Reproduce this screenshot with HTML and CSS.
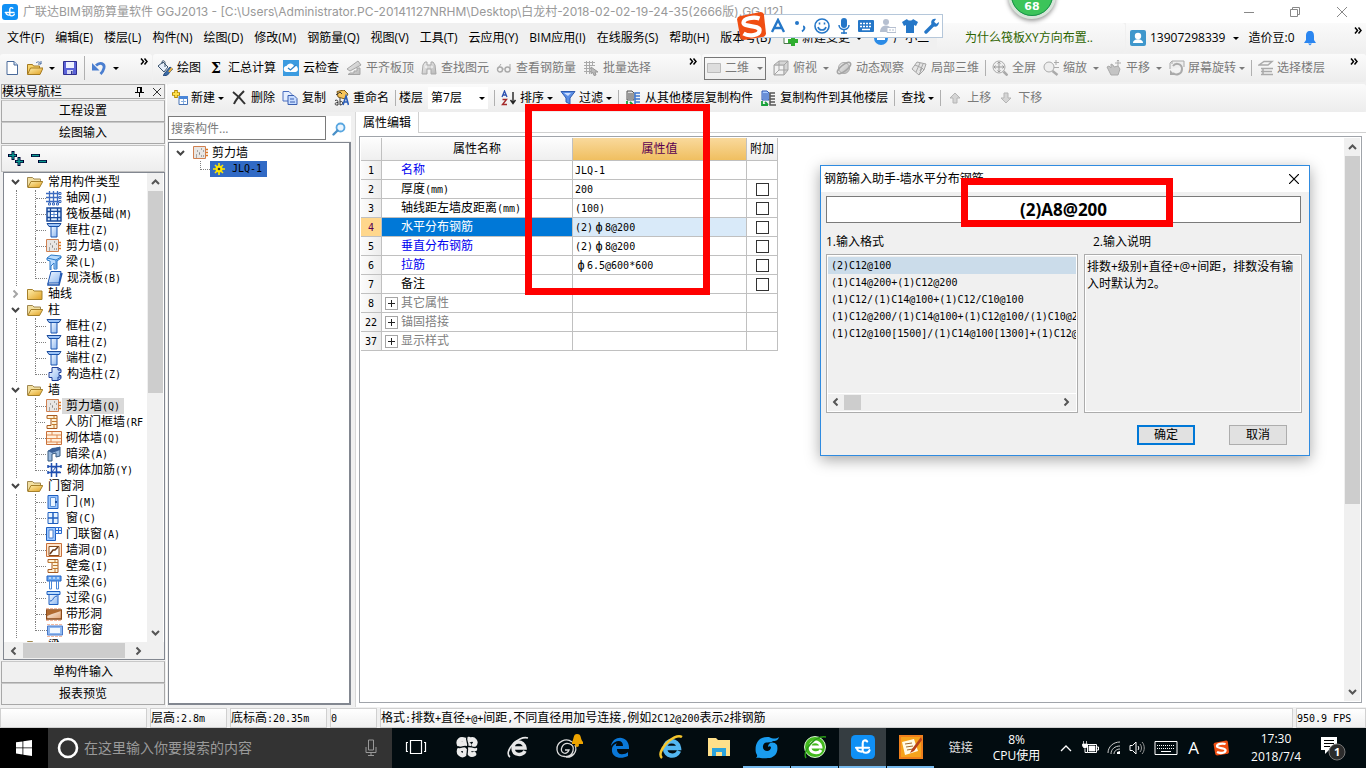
FILE: index.html
```html
<!DOCTYPE html>
<html lang="zh-CN">
<head>
<meta charset="utf-8">
<title>广联达BIM钢筋算量软件 GGJ2013</title>
<link rel="stylesheet" href="styles.css">
</head>
<body>
<svg class="defs" aria-hidden="true">
  <defs>
    <linearGradient id="gold" x1="0" y1="0" x2="1" y2="1"><stop offset="0" stop-color="#fff0b0"/><stop offset="1" stop-color="#e0a020"/></linearGradient>
    <linearGradient id="blu" x1="0" y1="0" x2="1" y2="1"><stop offset="0" stop-color="#f2f8ff"/><stop offset="1" stop-color="#8fb8f0"/></linearGradient>
    <linearGradient id="brn" x1="0" y1="0" x2="1" y2="1"><stop offset="0" stop-color="#fffdf8"/><stop offset="1" stop-color="#e0a070"/></linearGradient>
    <linearGradient id="gry" x1="0" y1="0" x2="1" y2="1"><stop offset="0" stop-color="#f0f0f0"/><stop offset="1" stop-color="#b8b8b8"/></linearGradient>
  </defs>
  <symbol id="logo" viewBox="0 0 16 16"><rect width="16" height="16" rx="3" fill="#1090f5"/><path d="M10.800 4.300C9.600 3 7.800 3.600 7.800 5.500V11M3.300 8.500H12M4 8.700c0 2.600 3.500 2.600 3.800 2 .6 1.600 4 1.600 4.600-.6" fill="none" stroke="#fff" stroke-width="1.400" stroke-linecap="round"/></symbol>
  <symbol id="new" viewBox="0 0 16 16"><path d="M3 1.500h7l3.500 3.500v9.500H3z" fill="#fff" stroke="#4a6a9a"/><path d="M10 1.500V5h3.500" fill="#cfe0f5" stroke="#4a6a9a"/></symbol>
  <symbol id="open" viewBox="0 0 16 16"><path d="M.5 14V4.500h5l1 1.500h6v2" fill="#f7d36b" stroke="#a57a20"/><path d="M.5 14.500 3.500 8H16l-3 6.500z" fill="url(#gold)" stroke="#a57a20"/><path d="M9 3c2-2 4-1 5 1m0-3v3h-3" fill="none" stroke="#4a6fa5"/></symbol>
  <symbol id="save" viewBox="0 0 16 16"><path d="M1.500 1.500h13v13h-13z" fill="#5b63d8" stroke="#2f2f8f"/><path d="M4 2h8v6H4z" fill="#eef1ff"/><path d="M5 10h6v4H5z" fill="#d8dcf5"/><path d="M9 11h1.500v3H9z" fill="#333a90"/></symbol>
  <symbol id="undo" viewBox="0 0 16 16"><path d="M5 5.500c4-4 9-2 8 2.500-.6 2.500-2 4.500-3.500 6" fill="none" stroke="#4a7ed0" stroke-width="2.800"/><path d="M1 3v7.500h7.500z" fill="#4a7ed0"/></symbol>
  <symbol id="draw" viewBox="0 0 16 16"><path d="m1 6 5-4 5 5-4 5z" fill="#e5edf8" stroke="#39526d"/><path d="M5 4V1.500c1-1.500 3-.5 3 1V7" fill="none" stroke="#39526d"/><path d="m7 14 6-7 2.500 2-5 6-4 1z" fill="#3d6da8" stroke="#254a7c"/><path d="m12 12 3-4" stroke="#f2b23a" stroke-width="2"/></symbol>
  <symbol id="cloud" viewBox="0 0 16 16"><path d="M0 0h16v16H0z" fill="#3b9be0"/><path d="M4 12a3 3 0 0 1-.5-6C5 2.500 10 2.500 11 6a3 3 0 0 1 1.500 6z" fill="#fff"/><path d="m5 8 2.500 2L13 5" fill="none" stroke="#2d82c8" stroke-width="1.300"/></symbol>
  <symbol id="slab" viewBox="0 0 16 16"><path d="m1 9 11-8 3 4-11 6zM2 14.500h12V8h-3v3H8v2H4z" fill="url(#gry)" stroke="#a5a5a5"/></symbol>
  <symbol id="bino" viewBox="0 0 16 16"><path d="M2 5 4 2h2v3h4V2h2l2 3 1 9h-5V9H6v5H1z" fill="url(#gry)" stroke="#a8a8a8"/><path d="M4 7h2m4 0h2" stroke="#fff"/></symbol>
  <symbol id="glass" viewBox="0 0 16 16"><path d="M1.500 9 5 4M14 9V4M6.500 9h2" fill="none" stroke="#aaa"/><circle cx="4" cy="9.500" r="2.500" fill="none" stroke="#aaa" stroke-width="1.400"/><circle cx="11.500" cy="9.500" r="2.500" fill="none" stroke="#aaa" stroke-width="1.400"/></symbol>
  <symbol id="batch" viewBox="0 0 16 16"><path d="M1 2.500h11M1 5.500h11M1 8.500h7M1 11.500h7M3.500 1v13M6.500 1v13M9.500 1v5" stroke="#aaa"/><path d="m8 7 7 5h-3l1 3-2 .5-1-3-2 1z" fill="#bbb" stroke="#999"/></symbol>
  <symbol id="cube" viewBox="0 0 16 16"><path d="m1 5 5-4h9v9l-4 5H1z" fill="#d5d5d5" stroke="#a5a5a5"/><path d="M2 6h8v8H2z" fill="#f2f2f2"/><path d="M1 5h10v10M11 5l4-4M6 1v9l-5 5M6 10h9" fill="none" stroke="#a5a5a5"/></symbol>
  <symbol id="planet" viewBox="0 0 16 16"><circle cx="8" cy="8" r="5.500" fill="url(#gry)" stroke="#aaa"/><ellipse cx="8" cy="8" rx="8" ry="3" transform="rotate(-38 8 8)" fill="none" stroke="#a5a5a5" stroke-width="1.500"/></symbol>
  <symbol id="part" viewBox="0 0 16 16"><path d="m1 9 5-7 9 2-2 6-5 5z" fill="#e5e5e5" stroke="#a5a5a5"/><path d="m4 5 7 3 2 2M9 3 5 12M11 8l-3 7M12 4l-3 7" stroke="#a5a5a5" fill="none"/></symbol>
  <symbol id="full" viewBox="0 0 16 16"><circle cx="7" cy="7" r="6" fill="#eee" stroke="#aaa"/><path d="M7 2v10M2 7h10M5.500 3.500 7 2l1.500 1.500M5.500 10.500 7 12l1.500-1.500M3.500 5.500 2 7l1.500 1.500M10.500 5.500 12 7l-1.500 1.500" fill="none" stroke="#999"/><path d="m11.500 11.500 4 4" stroke="#aaa" stroke-width="2.500"/></symbol>
  <symbol id="zoomi" viewBox="0 0 16 16"><circle cx="6" cy="7" r="5" fill="#eee" stroke="#aaa"/><path d="m9.500 11 5 4" stroke="#aaa" stroke-width="2.500"/><path d="M13 0v5M11 2.500h5M11 7.500h5" stroke="#aaa"/></symbol>
  <symbol id="hand" viewBox="0 0 16 16"><path d="m1 7 2-1 2 2V4l2 1 1 2 4-1 2 3-2 6H5z" fill="#c4c4c4" stroke="#aaa"/><path d="M12 0v6M9 3h6M10.800 1 12 0l1.200 1" stroke="#aaa" fill="none"/></symbol>
  <symbol id="rot" viewBox="0 0 16 16"><path d="M1 9V3l2-2h12v6M3 1v3" fill="#eee" stroke="#aaa"/><path d="M4 6c3-4 9-2 9 3s-6 7-9 4" fill="none" stroke="#aaa" stroke-width="2"/><path d="M1 10v5h5z" fill="#aaa"/></symbol>
  <symbol id="floors" viewBox="0 0 16 16"><path d="M1 5 6 1.500h8L10 5zM3 8.500h12M5 8v6M3 11.500h11M3 14.500h12" fill="none" stroke="#aaa" stroke-width="1.500"/></symbol>
  <symbol id="add" viewBox="0 0 16 16"><path d="M7 6.500h8.500v8H7z" fill="#fff" stroke="#4673b5"/><path d="M7 6h9v3H7z" fill="#4a86d8"/><path d="M9 11.500h5M11.500 9v5" stroke="#8ab0e0"/><path d="M4 0v8M0 4h8" stroke="#b58b00" stroke-width="3.600"/><path d="M4 1v6M1 4h6" stroke="#ffe04a" stroke-width="1.800"/></symbol>
  <symbol id="del" viewBox="0 0 16 16"><path d="M2 2c4 3 8 7 12 12M13 1C9 5 5 9 3 14" fill="none" stroke="#333" stroke-width="2"/></symbol>
  <symbol id="copy" viewBox="0 0 16 16"><path d="M1 1.500h6l3 3V11H1z" fill="#e5efff" stroke="#4a6fc0"/><path d="M6 5.500h6l3 3v6H6z" fill="#c7dcff" stroke="#3a5fb0"/><path d="M8 9h4m-4 3h5" stroke="#3a5fb0"/></symbol>
  <symbol id="ren" viewBox="0 0 16 16"><path d="M4 1.500 11 0l4 4-3 5-7-2z" fill="#f7c45a" stroke="#7d5a1a"/><path d="m3 5 4-3 2 2" stroke="#333" fill="none"/><path d="M2 10.500c3-1 3 0 3 4.500-4 .5-4-2.500 0-2.500M7 8v7c4 0 3-5 0-3" fill="none" stroke="#333"/><path d="m10 15 3-9 2.500 9m-4-3h3" fill="none" stroke="#2b5db8" stroke-width="1.600"/></symbol>
  <symbol id="sort" viewBox="0 0 16 16"><path d="m1 7 2.500-6L6 7M2 5h3" fill="none" stroke="#2b50b0" stroke-width="1.300"/><path d="M1.500 9.500h4l-4 5h4.500" fill="none" stroke="#a52a2a" stroke-width="1.400"/><path d="M12 2v11M9.500 10l2.500 3.500 2.500-3.500" fill="none" stroke="#222" stroke-width="1.400"/></symbol>
  <symbol id="filt" viewBox="0 0 16 16"><path d="M1 1.500h14L10 8v6l-4-2V8z" fill="#5b8ee5" stroke="#2f5cb0"/><path d="M4 3h7L8 6z" fill="#cfe0ff"/></symbol>
  <symbol id="cpf" viewBox="0 0 16 16"><path d="M2 1h5l2 2v7H2z" fill="#ddd" stroke="#555"/><path d="M3 4h5M3 6h5M3 8h5" stroke="#555"/><path d="M15 3h-5v12h6M10 6h5M10 9h5M10 12h5" fill="none" stroke="#3d77d0" stroke-width="1.500"/><path d="M2 11v4h6M5 12l3 3" fill="none" stroke="#19a03a" stroke-width="1.800"/></symbol>
  <symbol id="cpt" viewBox="0 0 16 16"><path d="M2 1h5l2 2v7H2z" fill="#a8caff" stroke="#2c54b0"/><path d="M3 4h5M3 6h5M3 8h5" stroke="#2c54b0"/><path d="M15 3h-5v12h6M10 6h5M10 9h5M10 12h5" fill="none" stroke="#555" stroke-width="1.500"/><path d="M2 11v4h6M5 12l3 3" fill="none" stroke="#19a03a" stroke-width="1.800"/></symbol>
  <symbol id="up" viewBox="0 0 16 16"><path d="m8 3 5 5h-3v5H6V8H3z" fill="#d5d5d5" stroke="#b5b5b5"/></symbol>
  <symbol id="down" viewBox="0 0 16 16"><path d="m8 13 5-5h-3V3H6v5H3z" fill="#d5d5d5" stroke="#b5b5b5"/></symbol>
  <symbol id="car" viewBox="0 0 6 3"><path d="M0 0h6L3 3z" fill="currentColor"/></symbol>
  <symbol id="more" viewBox="0 0 8 7"><path d="m1 .5 2.500 3L1 6.500m3.500-6 2.500 3-2.500 3" fill="none" stroke="#000" stroke-width="1.500"/></symbol>
  <symbol id="user" viewBox="0 0 16 16"><rect width="16" height="16" rx="2" fill="#3f97cc"/><circle cx="8" cy="6" r="3.200" fill="#fff"/><path d="M3 13c0-5 10-5 10 0z" fill="#fff"/></symbol>
  <symbol id="bell" viewBox="0 0 12 16"><path d="M6 1C3 1 2 3 2 6v4L0 13h12l-2-3V6c0-3-1-5-4-5z" fill="#2b86f0"/><path d="m4 13.500 2 2 2-2z" fill="#2b86f0"/></symbol>
  <symbol id="lens" viewBox="0 0 14 14"><circle cx="8.500" cy="5.500" r="4" fill="#eaf5ff" stroke="#58a6e0" stroke-width="1.800"/><path d="M5.500 8.500 1.500 12.500" stroke="#4a90c8" stroke-width="2.400" stroke-linecap="round"/></symbol>
  <symbol id="av" viewBox="0 0 9 6"><path d="M1 1l3.500 3.500L8 1" fill="none" stroke="currentColor" stroke-width="2"/></symbol>
  <symbol id="fo" viewBox="0 0 16 16"><path d="M.5 13V3.500h5L7 5h6.500v3" fill="#f2dfa0" stroke="#a08850"/><path d="M.8 13.500 4 7.500h11.800l-3.300 6z" fill="url(#gold)" stroke="#a5802a"/></symbol>
  <symbol id="fc" viewBox="0 0 16 16"><path d="M.5 13.500v-10h5L7 5h8v8.500z" fill="url(#gold)" stroke="#a5802a"/></symbol>
  <symbol id="t-grid" viewBox="0 0 16 16"><path d="M3.500 1v12M7.500 1v12M11.500 1v12M0 3.500h13M0 7.500h13M0 11.500h13" stroke="#3d6cc0" stroke-width="1.300"/><path d="M13 2.500h2v2h-2zM13 6.500h2v2h-2zM13 10.500h2v2h-2zM2.500 13h2v2h-2zM6.500 13h2v2h-2zM10.500 13h2v2h-2z" fill="#fff" stroke="#3d6cc0"/></symbol>
  <symbol id="t-raft" viewBox="0 0 16 16"><path d="M1 2h14v13H1z" fill="#d8ebff" stroke="#1a4a9a" stroke-width="1.500"/><path d="M4.500 2v13M11.500 2v13M1 5.500h14M1 11.500h14" stroke="#1a4a9a" stroke-width="1.300"/><path d="M5 6h6v5H5z" fill="#fff"/><path d="M8 6v5M5 8.500h6" stroke="#5a8ad0"/></symbol>
  <symbol id="t-col" viewBox="0 0 16 16"><path d="M1 1.500h14l-2 3H3z" fill="#9cc4f8" stroke="#1a4a9a"/><path d="M5 4.500h6V15H5z" fill="url(#blu)" stroke="#1a55b0"/></symbol>
  <symbol id="t-wall" viewBox="0 0 16 16"><path d="M.5 1.500h12v12H.5z" fill="#e8e6e4" stroke="#d08050"/><path d="M3 10h1m2-2h1M4 6h1m3 5h1m1-5h1m-3-2h1M3 12h1m6-1h1M6 9h1" stroke="#666"/><path d="M13 4.500h2M13 7.500h2M13 10.500h2" stroke="#e07820" stroke-width="1.300"/></symbol>
  <symbol id="t-beam" viewBox="0 0 16 16"><path d="m1 4 4-3 10 1v2l-4 3v8H8V9l-3 3v4H4V7L1 6z" fill="#b9dcff" stroke="#2a78c8"/><path d="m1 4 9 2 5-3M10 6v8" stroke="#2a78c8" fill="none"/></symbol>
  <symbol id="t-slab" viewBox="0 0 16 16"><path d="M4 1.500h10L12 13H1z" fill="url(#blu)" stroke="#1f56b0"/><path d="M1 13v2h11l3-12" fill="none" stroke="#1f56b0" stroke-width="1.500"/></symbol>
  <symbol id="t-con" viewBox="0 0 16 16"><path d="M5 1.500h6l3 2v3h-2v3h2v3l-3 2H5v-3H2v-5h3z" fill="url(#blu)" stroke="#1f3f98"/><path d="M5 6.500H2m3 5H2M11 2v2h3m-3 10v-3h3" stroke="#1f3f98" fill="none"/></symbol>
  <symbol id="t-civ" viewBox="0 0 16 16"><path d="M2 1.500h10v13H2v-3h4v-7H2z" fill="#fff3d8" stroke="#a85a20"/><path d="M2 4.500h10M7 7.500h5M7 10.500h5M9 2v3m0 6v3" stroke="#c07a30"/></symbol>
  <symbol id="t-brick" viewBox="0 0 16 16"><path d="M.5 1.500h15v13H.5z" fill="#fff0dc" stroke="#c8703a"/><path d="M1 5h14M1 8.500h14M1 12h14M6 2v3m5 0v3.500m-6 0V12m6 0v2" stroke="#e08a50"/></symbol>
  <symbol id="t-ab" viewBox="0 0 16 16"><path d="M2 5 14 1v9l-4 1v-4l-4 1v7H2z" fill="#9cbce0" stroke="#35587f"/><path d="m2 5 4 2 8-3V1L6 2z" fill="#3a6098"/></symbol>
  <symbol id="t-jj" viewBox="0 0 16 16"><path d="M1 4.500h13M1 10.500h13M4.500 1v14M9.500 1v14M1 3v3M14 3v3M1 9v3" fill="none" stroke="#1f4fb0" stroke-width="1.500"/><path d="M5 5h4l-4 5h8" fill="none" stroke="#1f4fb0"/></symbol>
  <symbol id="t-door" viewBox="0 0 16 16"><path d="M2 1.500h10v13H2z" fill="#9cc7ff" stroke="#1f5fc0"/><path d="M4.500 3.500h5v9h-5z" fill="#eaf4ff" stroke="#5a90d8"/><path d="M9 7h2v2H9z" fill="#1f4fa0"/></symbol>
  <symbol id="t-win" viewBox="0 0 16 16"><path d="M2 2.500h10v11H2z" fill="#e6f3ff" stroke="#1f5fc0"/><path d="M7 2v12M2 8h10" stroke="#1f5fc0" stroke-width="1.500"/></symbol>
  <symbol id="t-dw" viewBox="0 0 16 16"><path d="M.5 1.500h9v13h-9z" fill="#9cc7ff" stroke="#1f5fc0"/><path d="M3 4h4v8H3z" fill="#fff" stroke="#4a80d0"/><path d="M9.500 1.500h6v6h-6zM12.500 1v6M10 4.500h6" fill="#e6f3ff" stroke="#2b6cd0"/></symbol>
  <symbol id="t-hole" viewBox="0 0 16 16"><path d="M.5 1.500h15v13H.5z" fill="#ffe5cc" stroke="#c8703a"/><path d="M3 4.500h10v9H3z" fill="#fff" stroke="#8a4a1a"/><path d="m4 12 3-4h2l3-3" fill="none" stroke="#6a3a1a" stroke-width="1.500"/></symbol>
  <symbol id="t-ll" viewBox="0 0 16 16"><path d="M1 2h14v5H1z" fill="#6aa8f0" stroke="#1f5fc0"/><path d="M3.500 7h2v8h-2zM10.500 7h2v8h-2z" fill="#fff" stroke="#4a88d8"/><path d="M4 3v2m4-2v2m4-2v2" stroke="#fff"/></symbol>
  <symbol id="t-gl" viewBox="0 0 16 16"><path d="M1 1.500h13v3H1z" fill="#b9dcff" stroke="#1f5fc0"/><path d="M3 4.500h9v10H3z" fill="url(#blu)" stroke="#1f5fc0"/><path d="M4 11c4 0 2-4 7-5" fill="none" stroke="#1f5fc0"/></symbol>
  <symbol id="t-sh" viewBox="0 0 16 16"><path d="M0 2.500h16M0 14.500h16" stroke="#f3b9a0" stroke-dasharray="3 1"/><path d="M.5 4h15v9H.5z" fill="url(#brn)" stroke="#8a4a1a" stroke-width="1.400"/><path d="m1 10 5-2 9-3V4H1z" fill="#b06a30"/></symbol>
  <symbol id="t-sw" viewBox="0 0 16 16"><path d="M0 2.500h16M0 14.500h16" stroke="#f3b9a0" stroke-dasharray="3 1"/><path d="M.5 4h15v9H.5z" fill="#8fb8f0" stroke="#4a78c8"/><path d="M3 6h10v5H3z" fill="#f2f8ff"/></symbol>
  <symbol id="sogou" viewBox="0 0 28 28"><path d="M3 5 23 1q2 0 3 2l2 18q0 2-2 3L7 27q-2 0-3-2L1 8q0-2 2-3z" fill="#f04e12"/><path d="M22 7C16 5 7 7 7 11s15 2 15 7-10 6-15 3" fill="none" stroke="#fff" stroke-width="4"/></symbol>
</svg>

<div class="app">
  <header class="titlebar">
    <svg class="i16"><use href="#logo"/></svg>
    <h1 class="title">广联达BIM钢筋算量软件 GGJ2013 - [C:\Users\Administrator.PC-20141127NRHM\Desktop\白龙村-2018-02-02-19-24-35(2666版).GGJ12]</h1>
    <div class="winbtns">
      <button aria-label="最小化"><svg width="12" height="12" viewBox="0 0 12 12"><path d="M1 6.500h10" stroke="#888"/></svg></button>
      <button aria-label="还原"><svg width="12" height="12" viewBox="0 0 12 12"><path d="M1.500 3.500h7v7h-7zM3.500 3.500v-2h7v7h-2" fill="none" stroke="#888"/></svg></button>
      <button aria-label="关闭"><svg width="12" height="12" viewBox="0 0 12 12"><path d="m1 1 10 10M11 1 1 11" stroke="#888"/></svg></button>
    </div>
  </header>

  <nav class="menubar">
    <div class="menus">
      <button>文件(F)</button><button>编辑(E)</button><button>楼层(L)</button><button>构件(N)</button><button>绘图(D)</button><button>修改(M)</button><button>钢筋量(Q)</button><button>视图(V)</button><button>工具(T)</button><button>云应用(Y)</button><button>BIM应用(I)</button><button>在线服务(S)</button><button>帮助(H)</button><button>版本号(B)</button>
      <button class="tb"><svg class="i16" viewBox="0 0 16 16"><path d="M2 1.500h10v12H2z" fill="#fff" stroke="#4a7a4a"/><path d="M11 6v10M6 11h10" stroke="#2fae2f" stroke-width="4"/></svg>新建变更<svg class="car gap"><use href="#car"/></svg></button>
      <button class="tb"><svg class="i16" viewBox="0 0 16 16"><circle cx="8" cy="8" r="7" fill="#2b8be6"/><path d="M4 7h8v3H4z" fill="#fff"/></svg>广小二</button>
    </div>
    <div class="tip"><a href="#tip">为什么筏板XY方向布置..</a></div>
    <div class="account">
      <button class="tb"><svg class="i16"><use href="#user"/></svg>13907298339<svg class="car"><use href="#car"/></svg></button>
      <span>造价豆:0</span>
      <button aria-label="通知"><svg width="12" height="16"><use href="#bell"/></svg></button>
      <button class="more" aria-label="更多"><svg width="8" height="7"><use href="#more"/></svg></button>
    </div>
  </nav>

  <div class="toolrow">
    <div class="tools file">
      <button aria-label="新建"><svg class="i16"><use href="#new"/></svg></button>
      <button class="tb wide" aria-label="打开"><svg class="i16"><use href="#open"/></svg><svg class="car"><use href="#car"/></svg></button>
      <button aria-label="保存"><svg class="i16"><use href="#save"/></svg></button>
      <i class="sep"></i>
      <button class="tb wide" aria-label="撤销"><svg class="i16"><use href="#undo"/></svg><svg class="car"><use href="#car"/></svg></button>
      <button class="more" aria-label="更多"><svg width="8" height="7"><use href="#more"/></svg></button>
    </div>
    <div class="tools draw">
      <button class="tb"><svg class="i16"><use href="#draw"/></svg>绘图</button>
      <button class="tb"><b class="sigma">Σ</b>汇总计算</button>
      <button class="tb"><svg class="i16"><use href="#cloud"/></svg>云检查</button>
      <button class="tb off"><svg class="i16"><use href="#slab"/></svg>平齐板顶</button>
      <button class="tb off"><svg class="i16"><use href="#bino"/></svg>查找图元</button>
      <button class="tb off"><svg class="i16"><use href="#glass"/></svg>查看钢筋量</button>
      <button class="tb off"><svg class="i16"><use href="#batch"/></svg>批量选择</button>
      <button class="more" aria-label="更多"><svg width="8" height="7"><use href="#more"/></svg></button>
    </div>
    <div class="tools view">
      <label class="combo"><svg width="14" height="10" viewBox="0 0 14 10"><path d="M.5.5h13v9H.5z" fill="#ddd" stroke="#bbb"/></svg><select aria-label="视图模式"><option>二维</option></select><svg class="car"><use href="#car"/></svg></label>
      <button class="tb off"><svg class="i16"><use href="#cube"/></svg>俯视<svg class="car gap"><use href="#car"/></svg></button>
      <button class="tb off"><svg class="i16"><use href="#planet"/></svg>动态观察</button>
      <button class="tb off"><svg class="i16"><use href="#part"/></svg>局部三维</button>
      <i class="sep"></i>
      <button class="tb off"><svg class="i16"><use href="#full"/></svg>全屏</button>
      <button class="tb off"><svg class="i16"><use href="#zoomi"/></svg>缩放<svg class="car gap"><use href="#car"/></svg></button>
      <button class="tb off"><svg class="i16"><use href="#hand"/></svg>平移<svg class="car gap"><use href="#car"/></svg></button>
      <button class="tb near off"><svg class="i16"><use href="#rot"/></svg>屏幕旋转<svg class="car"><use href="#car"/></svg></button>
      <i class="sep"></i>
      <button class="tb near off"><svg class="i16"><use href="#floors"/></svg>选择楼层</button>
      <button class="more" aria-label="更多"><svg width="8" height="7"><use href="#more"/></svg></button>
    </div>
  </div>

  <div class="workspace">
    <aside class="nav">
      <div class="navhead"><span>模块导航栏</span>
        <button aria-label="固定"><svg width="9" height="11" viewBox="0 0 9 11"><path d="M2.500 1v5M6 1v5M2 1.500h5M0 6.500h9M4.500 7v4" stroke="#000" fill="none"/><path d="M5 1h2v5H5z"/></svg></button>
        <button aria-label="关闭"><svg width="8" height="8" viewBox="0 0 8 8"><path d="m0 0 8 8M8 0 0 8" stroke="#333"/></svg></button>
      </div>
      <button class="bar">工程设置</button>
      <button class="bar">绘图输入</button>
      <div class="treetools">
        <button aria-label="全部展开"><svg width="16" height="15" viewBox="0 0 16 15"><path d="M5 0v9M0 4.500h9M11 6v9M7 10.500h9" stroke="#003" stroke-width="3"/><path d="M5 1v7M1 4.500h7M11 7v7M8 10.500h7" stroke="#0a9a90" stroke-width="1.400"/></svg></button>
        <button aria-label="全部折叠"><svg width="16" height="15" viewBox="0 0 16 15"><path d="M0 4.500h9M7 10.500h9" stroke="#003" stroke-width="3"/><path d="M1 4.500h7M8 10.500h7" stroke="#0a9a90" stroke-width="1.400"/></svg></button>
      </div>
      <div class="treebox">
        <div class="treemid">
          <ul class="tree">
            <li><div class="node"><svg class="exp"><use href="#av"/></svg><svg class="i16"><use href="#fo"/></svg>常用构件类型</div>
              <ul>
                <li><svg class="i16"><use href="#t-grid"/></svg><span>轴网<s>(J)</s></span></li>
                <li><svg class="i16"><use href="#t-raft"/></svg><span>筏板基础<s>(M)</s></span></li>
                <li><svg class="i16"><use href="#t-col"/></svg><span>框柱<s>(Z)</s></span></li>
                <li><svg class="i16"><use href="#t-wall"/></svg><span>剪力墙<s>(Q)</s></span></li>
                <li><svg class="i16"><use href="#t-beam"/></svg><span>梁<s>(L)</s></span></li>
                <li><svg class="i16"><use href="#t-slab"/></svg><span>现浇板<s>(B)</s></span></li>
              </ul></li>
            <li><div class="node shut"><svg class="exp"><use href="#av"/></svg><svg class="i16"><use href="#fc"/></svg>轴线</div></li>
            <li><div class="node"><svg class="exp"><use href="#av"/></svg><svg class="i16"><use href="#fo"/></svg>柱</div>
              <ul>
                <li><svg class="i16"><use href="#t-col"/></svg><span>框柱<s>(Z)</s></span></li>
                <li><svg class="i16"><use href="#t-col"/></svg><span>暗柱<s>(Z)</s></span></li>
                <li><svg class="i16"><use href="#t-col"/></svg><span>端柱<s>(Z)</s></span></li>
                <li><svg class="i16"><use href="#t-con"/></svg><span>构造柱<s>(Z)</s></span></li>
              </ul></li>
            <li><div class="node"><svg class="exp"><use href="#av"/></svg><svg class="i16"><use href="#fo"/></svg>墙</div>
              <ul>
                <li><svg class="i16"><use href="#t-wall"/></svg><span class="cur">剪力墙<s>(Q)</s></span></li>
                <li><svg class="i16"><use href="#t-civ"/></svg><span>人防门框墙<s>(RF</s></span></li>
                <li><svg class="i16"><use href="#t-brick"/></svg><span>砌体墙<s>(Q)</s></span></li>
                <li><svg class="i16"><use href="#t-ab"/></svg><span>暗梁<s>(A)</s></span></li>
                <li><svg class="i16"><use href="#t-jj"/></svg><span>砌体加筋<s>(Y)</s></span></li>
              </ul></li>
            <li><div class="node"><svg class="exp"><use href="#av"/></svg><svg class="i16"><use href="#fo"/></svg>门窗洞</div>
              <ul>
                <li><svg class="i16"><use href="#t-door"/></svg><span>门<s>(M)</s></span></li>
                <li><svg class="i16"><use href="#t-win"/></svg><span>窗<s>(C)</s></span></li>
                <li><svg class="i16"><use href="#t-dw"/></svg><span>门联窗<s>(A)</s></span></li>
                <li><svg class="i16"><use href="#t-hole"/></svg><span>墙洞<s>(D)</s></span></li>
                <li><svg class="i16"><use href="#t-civ"/></svg><span>壁龛<s>(I)</s></span></li>
                <li><svg class="i16"><use href="#t-ll"/></svg><span>连梁<s>(G)</s></span></li>
                <li><svg class="i16"><use href="#t-gl"/></svg><span>过梁<s>(G)</s></span></li>
                <li><svg class="i16"><use href="#t-sh"/></svg><span>带形洞</span></li>
                <li><svg class="i16"><use href="#t-sw"/></svg><span>带形窗</span></li>
              </ul></li>
            <li><div class="node"><svg class="exp"></svg><svg class="i16"><use href="#fo"/></svg>梁</div></li>
          </ul>
          <div class="vbar tree-v"><svg class="arr up"><use href="#av"/></svg><i class="thumb"></i><svg class="arr end"><use href="#av"/></svg></div>
        </div>
        <div class="hbar tree-h"><svg class="arr left"><use href="#av"/></svg><i class="thumb"></i><svg class="arr right"><use href="#av"/></svg></div>
      </div>
      <button class="bar">单构件输入</button>
      <button class="bar">报表预览</button>
    </aside>

    <div class="stage">
      <div class="tools edit">
        <button class="tb near"><svg class="i16"><use href="#add"/></svg>新建<svg class="car"><use href="#car"/></svg></button>
        <button class="tb"><svg class="i16"><use href="#del"/></svg>删除</button>
        <button class="tb"><svg class="i16"><use href="#copy"/></svg>复制</button>
        <button class="tb"><svg class="i16"><use href="#ren"/></svg>重命名</button>
        <i class="sep"></i>
        <label class="floor">楼层<span class="floorbox"><select><option>第7层</option></select><svg class="car"><use href="#car"/></svg></span></label>
        <i class="sep"></i>
        <button class="tb near"><svg class="i16"><use href="#sort"/></svg>排序<svg class="car"><use href="#car"/></svg></button>
        <button class="tb near"><svg class="i16"><use href="#filt"/></svg>过滤<svg class="car"><use href="#car"/></svg></button>
        <i class="sep"></i>
        <button class="tb"><svg class="i16"><use href="#cpf"/></svg>从其他楼层复制构件</button>
        <button class="tb"><svg class="i16"><use href="#cpt"/></svg>复制构件到其他楼层</button>
        <i class="sep"></i>
        <button class="tb near">查找<svg class="car"><use href="#car"/></svg></button>
        <i class="sep"></i>
        <button class="tb off"><svg class="i16"><use href="#up"/></svg>上移</button>
        <button class="tb off"><svg class="i16"><use href="#down"/></svg>下移</button>
      </div>
      <div class="panes">
        <aside class="comps">
          <div class="search"><input type="text" aria-label="搜索构件" placeholder="搜索构件..."><button aria-label="搜索"><svg width="14" height="14"><use href="#lens"/></svg></button></div>
          <ul class="complist">
            <li><div class="node"><svg class="exp"><use href="#av"/></svg><svg class="i16"><use href="#t-wall"/></svg>剪力墙</div>
              <ul><li><span class="picked"><svg width="12" height="12" viewBox="0 0 12 12"><path d="M6 0v12M0 6h12M2 2l8 8M10 2l-8 8" stroke="#ffe600" stroke-width="1.600"/><circle cx="6" cy="6" r="3.500" fill="#ffe600"/><circle cx="6" cy="6" r="1.300" fill="#333"/></svg><s>JLQ-1</s></span></li></ul></li>
          </ul>
        </aside>
        <main class="editor">
          <div class="tabs"><button class="tab">属性编辑</button></div>
          <div class="sheet">
            <div class="sheetbody">
              <table class="props">
                <thead><tr><th class="no"></th><th class="name">属性名称</th><th class="val">属性值</th><th class="ext">附加</th></tr></thead>
                <tbody>
                  <tr><th><s>1</s></th><td class="key">名称</td><td><s>JLQ-1</s></td><td></td></tr>
                  <tr><th><s>2</s></th><td>厚度<s>(mm)</s></td><td><s>200</s></td><td><input type="checkbox" aria-label="附加 厚度"></td></tr>
                  <tr><th><s>3</s></th><td>轴线距左墙皮距离<s>(mm)</s></td><td><s>(100)</s></td><td><input type="checkbox" aria-label="附加 轴线距左墙皮距离"></td></tr>
                  <tr class="sel"><th><s>4</s></th><td>水平分布钢筋</td><td><s>(2)<em>ф</em>8@200</s></td><td><input type="checkbox" aria-label="附加 水平分布钢筋"></td></tr>
                  <tr><th><s>5</s></th><td class="key">垂直分布钢筋</td><td><s>(2)<em>ф</em>8@200</s></td><td><input type="checkbox" aria-label="附加 垂直分布钢筋"></td></tr>
                  <tr><th><s>6</s></th><td class="key">拉筋</td><td><s><em>ф</em>6.5@600*600</s></td><td><input type="checkbox" aria-label="附加 拉筋"></td></tr>
                  <tr><th><s>7</s></th><td>备注</td><td></td><td><input type="checkbox" aria-label="附加 备注"></td></tr>
                  <tr class="grp"><th><s>8</s></th><td><button class="plus" aria-label="展开其它属性"></button>其它属性</td><td></td><td></td></tr>
                  <tr class="grp"><th><s>22</s></th><td><button class="plus" aria-label="展开锚固搭接"></button>锚固搭接</td><td></td><td></td></tr>
                  <tr class="grp"><th><s>37</s></th><td><button class="plus" aria-label="展开显示样式"></button>显示样式</td><td></td><td></td></tr>
                </tbody>
              </table>
            </div>
            <div class="vbar sheet-v"><svg class="arr up"><use href="#av"/></svg><i class="thumb"></i><svg class="arr end"><use href="#av"/></svg></div>
          </div>
        </main>
      </div>
    </div>
  </div>

  <div class="status">
    <span class="c1"></span><span class="c2">层高<s>:2.8m</s></span><span class="c3">底标高<s>:20.35m</s></span><span class="c4"><s>0</s></span>
    <span class="c5">格式<s>:</s>排数<s>+</s>直径<s>+@+</s>间距<s>,</s>不同直径用加号连接<s>,</s>例如<s>2C12@200</s>表示<s>2</s>排钢筋</span><span class="c6"><s>950.9 FPS</s></span>
  </div>

  <footer class="taskbar">
    <button class="start" aria-label="开始"><svg width="16" height="16" viewBox="0 0 16 16"><path d="M0 2.300 6.500 1.400v6.100H0zM7.300 1.300 16 0v7.500H7.300zM0 8.300h6.500v6.200L0 13.600zM7.300 8.300H16V16l-8.700-1.300z" fill="#fff"/></svg></button>
    <div class="cortana">
      <svg width="22" height="22" viewBox="0 0 22 22"><circle cx="11" cy="11" r="9" fill="none" stroke="#fff" stroke-width="2.600"/></svg>
      <input type="text" aria-label="搜索" placeholder="在这里输入你要搜索的内容">
      <svg width="12" height="18" viewBox="0 0 12 18"><path d="M3.500 1h5v10h-5zM1 8v5.500h10V8M6 13.500V16M3 16.500h6" fill="none" stroke="#999"/></svg>
    </div>
    <div class="apps">
      <button class="pin" aria-label="任务视图"><svg width="22" height="16" viewBox="0 0 22 16"><path d="M5.500 1.500h11v13h-11zM3 3.500H1.500v9H3M19 3.500h1.500v9H19" fill="none" stroke="#fff" stroke-width="1.200"/></svg></button>
      <button class="pin" aria-label="四叶草"><svg width="24" height="24" viewBox="0 0 24 24"><g fill="none" stroke="#ececec" stroke-width="4.600" stroke-linecap="round"><path d="M10 5C5 3 3 6 4 9h6M14 4c-3 1-3 4 0 6M19 10c3-3 0-7-4-5M14 14c-1 4 2 7 5 5M20 14h-6M10 19c-4 3-8-2-5-5M5 14c3-1 6 0 5 5"/></g><path d="M12 2c-2 4 3 7 0 10 2 3-1 7 0 10M2 12c4 2 7-2 10 0 3-2 7 2 10 0" fill="none" stroke="#020c10" stroke-width="1.300"/></svg></button>
      <button class="pin" aria-label="浏览器"><svg width="24" height="24" viewBox="0 0 24 24"><path d="M19 16c-2 5-12 5-12-3s11-8 12 0H8" fill="none" stroke="#e8e8e8" stroke-width="3.400"/><path d="M4 22C-3 17 12 0 22 3" fill="none" stroke="#e8e8e8" stroke-width="1.600"/></svg></button>
      <button class="pin" aria-label="助手"><svg width="28" height="28" viewBox="0 0 28 28"><path d="M17 9C11 4 1 9 2 17s14 9 16 1-8-10-11-4 5 9 7 3h-4M20 12c3 7-3 13-9 12" fill="none" stroke="#ddd" stroke-width="1.300"/><path d="M22 1c-4 0-3 5-5 8v2h11V9c-3-3-1-8-6-8z" fill="#eda400"/><circle cx="22" cy="12" r="2" fill="#eda400"/></svg></button>
      <button class="pin" aria-label="Edge"><svg width="22" height="24" viewBox="0 0 22 24"><path d="M2 11C4-1 21 0 20 14H8c0 7 8 6 11 3v4C11 25 2 22 3 14c0-3 3-5 5-6-1 1-1 2-1 3h7c0-7-8-6-12 0z" fill="#0a78d8"/></svg></button>
      <button aria-label="Internet Explorer"><svg width="26" height="26" viewBox="0 0 26 26"><path d="M21 17c-3 7-14 6-14-3s13-9 14 0H8" fill="none" stroke="#53b7f0" stroke-width="4.400"/><path d="M4 24C-3 18 16-2 24 3" fill="none" stroke="#f4c52d" stroke-width="2.500"/></svg></button>
      <button aria-label="文件资源管理器"><svg width="22" height="20" viewBox="0 0 22 20"><path d="M0 1h8l2 2h12v16H0z" fill="#ffe08a"/><path d="M4 19v-8h14v8h-4v-4H8v4z" fill="#2ba3dc"/></svg></button>
      <button class="run" aria-label="G 应用"><svg width="24" height="24" viewBox="0 0 24 24"><path d="M24 2c-1 4-4 4-6 4-2 3-9-1-10 5-1 6 8 7 8 1-1-1-2-1-3 0 0-5 6-6 9-2 2 8-3 13-9 13-6 1-9-1-12 0 2-2 1-3 0-5-2-9 3-17 13-16 4 2 7 2 10 0z" fill="#1a9df0"/></svg></button>
      <button class="run" aria-label="360浏览器"><svg width="24" height="24" viewBox="0 0 24 24"><circle cx="12" cy="12" r="10.500" fill="#43b91e" stroke="#d5f0d0"/><path d="M18 15c-2 4-11 4-11-3s10-7 11 0H7" fill="none" stroke="#fff" stroke-width="2.800"/><path d="M3 23C-1 16 12 0 23 2" fill="none" stroke="#2a9a18" stroke-width="1.600"/></svg></button>
      <button class="run active" aria-label="GGJ2013"><svg width="24" height="24"><use href="#logo"/></svg></button>
      <button class="run" aria-label="便笺"><svg width="24" height="24" viewBox="0 0 24 24"><path d="M1 1h22v22H1z" fill="#f6a31c" stroke="#f0801c" stroke-width="2"/><path d="m3 7 12-3 4 12-13 4z" fill="#fffbe8"/><path d="m6 9 7-1m-6 4 7-1m-6 4 6-1" stroke="#a06a30"/><path d="M22 2 13 14l-2 4 4-2 8-11z" fill="#b84018"/></svg></button>
    </div>
    <div class="tray">
      <span class="link">链接</span>
      <span class="cpu">8%<br>CPU使用</span>
      <button class="chev" aria-label="显示隐藏的图标"><svg width="12" height="8" viewBox="0 0 12 8"><path d="m1 7 5-5 5 5" fill="none" stroke="#fff" stroke-width="1.300"/></svg></button>
      <svg width="17" height="14" viewBox="0 0 17 14"><path d="M5.500 3.500h9v8h-9zM15 6h1.500v3H15M3 8v3.500h2.500" fill="none" stroke="#fff"/><path d="M7 5h6v5H7zM.5 3h5v2L4 7H2L.5 5zM1.500 0v3M4.500 0v3" fill="#fff" stroke="#fff" stroke-width=".7"/></svg>
      <svg width="14" height="14" viewBox="0 0 14 14"><path d="M1 12C1 6 6 1 13 1M4 13c0-5 4-8 9-8M7 13c0-3 3-5 6-5" fill="none" stroke="#ccc"/><path d="M10 13v-2l3-1v3z" fill="#fff"/></svg>
      <svg width="17" height="14" viewBox="0 0 17 14"><path d="M1 4.500h2.500L7 1v12L3.500 9.500H1zM9 5c1 1 1 3 0 4" fill="none" stroke="#fff"/><path d="M11 3c2 2 2 6 0 8M13 1c3 3 3 9 0 12" fill="none" stroke="#999"/></svg>
      <svg width="24" height="14" viewBox="0 0 24 14"><path d="M1 .5h22v13H1z" fill="none" stroke="#fff"/><path d="M3 4.500h18M3 7.500h18" stroke="#fff" stroke-dasharray="1 1"/><path d="M7 10.500h10" stroke="#fff"/></svg>
      <span class="ime">A</span>
      <svg width="16" height="16"><use href="#sogou"/></svg>
      <span class="clock">17:30<br>2018/7/4</span>
      <button class="notes" aria-label="操作中心"><svg width="26" height="26" viewBox="0 0 26 26"><path d="M1 2h16v13H9l-4 4v-4H1z" fill="#fff"/><path d="M4 5.500h10M4 8.500h10M4 11.500h6" stroke="#000"/><circle cx="17" cy="17" r="8" fill="#2c2c2c" stroke="#777"/></svg><b>1</b></button>
    </div>
  </footer>
</div>

<div class="sogoubar">
  <svg class="slogo" width="30" height="30"><use href="#sogou"/></svg>
  <svg width="16" height="16" viewBox="0 0 16 16"><path d="m2 14 6-12 6 12M4 10h8" fill="none" stroke="#2577c8" stroke-width="2.400"/></svg>
  <svg width="16" height="16" viewBox="0 0 16 16"><circle cx="5" cy="5" r="2" fill="#2577c8"/><path d="M11 8.500c2 0 2 3-1 5" fill="none" stroke="#2577c8" stroke-width="2"/></svg>
  <svg width="16" height="16" viewBox="0 0 16 16"><circle cx="8" cy="8" r="7" fill="none" stroke="#2577c8" stroke-width="1.600"/><path d="M5.500 4.500v2m5-2v2M4 9c1 4 7 4 8 0" fill="none" stroke="#2577c8" stroke-width="1.600"/></svg>
  <svg width="16" height="16" viewBox="0 0 16 16"><rect x="5" y="0" width="6" height="10" rx="3" fill="#2577c8"/><path d="M3 7c0 6 10 6 10 0M8 12v4M5 15h6" fill="none" stroke="#2577c8" stroke-width="1.500"/></svg>
  <svg width="16" height="16" viewBox="0 0 16 16"><rect y="2" width="16" height="12" rx="1" fill="#2577c8"/><path d="M2 5.500h12M2 8.500h12" stroke="#fff" stroke-width="1.500" stroke-dasharray="2 1"/><path d="M4 11.500h8" stroke="#fff" stroke-width="1.500"/></svg>
  <svg width="16" height="16" viewBox="0 0 16 16"><circle cx="6" cy="4" r="3" fill="#b5bfd0"/><path d="M0 14c0-8 10-8 11-3v3z" fill="#b5bfd0"/><path d="M7 9.500h9v5H7z" fill="#fff" stroke="#b5bfd0"/><path d="M10 11v2m3-2v2" stroke="#b5bfd0"/></svg>
  <svg width="16" height="16" viewBox="0 0 16 16"><path d="m0 4 5-3c1 2 5 2 6 0l5 3-2 4-2-1v8H4V7L2 8z" fill="#2577c8"/></svg>
  <svg width="16" height="16" viewBox="0 0 16 16"><path d="m2 14 8-8" stroke="#2577c8" stroke-width="3.400" stroke-linecap="round"/><path d="M12 1C8 0 6 4 8 7s7 2 7-3l-3 2-2-2z" fill="#2577c8"/></svg>
</div>
<div class="ball">68</div>

<section class="dialog" role="dialog" aria-labelledby="dlg-title">
  <header><h2 id="dlg-title">钢筋输入助手-墙水平分布钢筋</h2><button aria-label="关闭"><svg width="10" height="10" viewBox="0 0 10 10"><path d="m0 0 10 10M10 0 0 10" stroke="#000" stroke-width="1.200"/></svg></button></header>
  <div class="dbody">
    <input class="expr" type="text" aria-label="钢筋信息" value="(2)A8@200">
    <div class="dcols">
      <div class="fmt">
        <h3>1.输入格式</h3>
        <div class="fmtbox">
          <ul><li class="on">(2)C12@100</li><li>(1)C14@200+(1)C12@200</li><li>(1)C12/(1)C14@100+(1)C12/C10@100</li><li>(1)C12@200/(1)C14@100+(1)C12@100/(1)C10@2</li><li>(1)C12@100[1500]/(1)C14@100[1300]+(1)C12@</li></ul>
          <div class="hbar fmt-h"><svg class="arr left"><use href="#av"/></svg><i class="thumb"></i><svg class="arr right"><use href="#av"/></svg></div>
        </div>
      </div>
      <div class="desc">
        <h3>2.输入说明</h3>
        <p>排数+级别+直径+@+间距，排数没有输入时默认为2。</p>
      </div>
    </div>
    <div class="dbtns"><button class="ok">确定</button><button>取消</button></div>
  </div>
</section>

<div class="mark mark-col"></div>
<div class="mark mark-expr"></div>
</body>
</html>
```
FILE: styles.css
```css
* { box-sizing: border-box; }
body {
  margin: 0;
  font: 12px/16px "Open Sans", "Noto Sans CJK SC", sans-serif;
  color: #000;
  overflow: hidden;
}
button, input, select { font: inherit; color: inherit; margin: 0; padding: 0; border: 0; background: none; border-radius: 0; }
button { white-space: nowrap; }
select { appearance: none; }
input::placeholder { color: #7a7a7a; opacity: 1; }
ul { list-style: none; margin: 0; padding: 0; }
h1, h2, h3, p { margin: 0; font-size: 12px; font-weight: 400; }
svg { display: block; flex: none; }
/* half-width Latin runs inside ideographic text */
s { font: 10px/16px "DejaVu Sans Mono", monospace; text-decoration: none; }
.defs { position: absolute; width: 0; height: 0; }
.i16 { width: 16px; height: 16px; }
.car { width: 6px; height: 3px; }

.app { display: flex; flex-direction: column; height: 100vh; background: #f0f0f0; }

/* title bar */
.titlebar { display: flex; align-items: center; height: 23px; flex: none; background: #fff; padding-left: 2px; gap: 5px; }
.title { color: #999; white-space: nowrap; flex: 1; font-family: Inter, "Noto Sans CJK SC", sans-serif; }
.winbtns { display: flex; }
.winbtns button { width: 46px; height: 22px; display: grid; place-items: center; }
.winbtns button:last-child { width: 48px; }

/* menus */
.menubar { display: flex; height: 31px; flex: none; padding-bottom: 1px; }
.menus { flex: 1; display: flex; align-items: center; gap: 11px; padding-left: 7px; min-width: 0; }
.tip { width: 188px; display: flex; align-items: center; padding-left: 28px; background: linear-gradient(#fafafa, #efefef); border-radius: 3px; }
.tip a { color: #2d6400; text-decoration: none; white-space: nowrap; }
.account { width: 240px; display: flex; align-items: center; gap: 9px; margin-left: 1px; padding: 0 4px; background: linear-gradient(#fafafa, #efefef); }
.account .car { margin-left: 4px; }
.more { margin-left: auto; align-self: flex-start; padding-top: 4px; }

/* toolbars */
.toolrow { display: flex; height: 30px; flex: none; gap: 1px; padding-bottom: 2px; }
.tools { display: flex; align-items: center; gap: 7px; padding: 0 4px; background: linear-gradient(#fbfbfb, #ededed); border-radius: 3px; }
.file { width: 152px; }
.draw { width: 548px; }
.view { flex: 1; padding: 0 8px 0 2px; }
.tb { display: flex; align-items: center; gap: 4px; }
.tb.wide { gap: 6px; }
.tb.near { gap: 3px; }
.tb .gap { margin-left: 2px; }
.off { color: #7a7a7a; }
.sep { width: 1px; height: 16px; background: #b0b0b0; margin: 0 -1px; }
.file .sep { height: 24px; }
.sigma { width: 16px; font: bold 14px/16px "DejaVu Serif", serif; text-align: center; }
.combo { display: flex; align-items: center; gap: 4px; width: 62px; height: 23px; border: 1px solid #777; padding: 0 2px; color: #7a7a7a; }
.combo select { width: 30px; }
.floor { display: flex; align-items: center; gap: 5px; margin-left: -3px; }
.floorbox { display: flex; align-items: center; width: 60px; height: 22px; background: #fff; padding: 0 3px; }
.floorbox select { flex: 1; }

/* workspace */
.workspace { flex: 1; display: flex; min-height: 0; }
.nav { width: 167px; flex: none; display: flex; flex-direction: column; padding: 0 1px 2px; border-right: 1px solid #fff; }
.navhead { display: flex; align-items: center; height: 15px; border: 1px solid #a5a5a5; gap: 9px; padding-right: 3px; margin-bottom: 1px; }
.navhead span { flex: 1; line-height: 13px; }
.bar { height: 22px; flex: none; background: #f0f0f0; border: 1px solid #a8a8a8; border-top-color: #c8c8c8; }
.treetools { display: flex; gap: 7px; align-items: center; height: 27px; flex: none; padding-left: 6px; border: 1px solid #c0c0c0; margin-top: 1px; background: linear-gradient(#fbfbfb, #ededed); }
.treebox { flex: 1; min-height: 0; display: flex; flex-direction: column; border: 1px solid #828790; margin: 0 0 1px 2px; }
.treemid { flex: 1; min-height: 0; display: flex; background: #fff; padding-right: 1px; }
.tree { flex: 1; min-width: 0; overflow: hidden; padding-top: 1px; }
.node { display: flex; align-items: center; height: 16px; white-space: nowrap; }
.exp { width: 9px; height: 6px; margin: 0 7px; color: #444; }
.node .i16 { margin-right: 5px; }
.shut .exp { transform: rotate(-90deg); color: #a5a5a5; }
.tree ul { margin-left: 12px; border-left: 1px dotted #808080; padding-left: 18px; }
.tree ul li { display: flex; height: 16px; white-space: nowrap; border-left: 1px dotted #808080; }
.tree ul li::before { content: ""; width: 10px; height: 8px; border-bottom: 1px dotted #808080; }
.tree ul li:last-child { border-left-color: transparent; }
.tree ul li:last-child::before { border-left: 1px dotted #808080; margin-left: -1px; width: 11px; }
.tree ul span { padding: 0 4px; }
.cur { background: #d9d9d9; }

.vbar, .hbar { display: flex; align-items: center; background: #f0f0f0; flex: none; color: #555; }
.vbar { flex-direction: column; width: 16px; }
.hbar { height: 17px; }
.thumb { background: #cdcdcd; }
.arr { width: 9px; height: 6px; margin: 6px 4px; }
.arr.up { transform: rotate(180deg); }
.arr.left { transform: rotate(90deg); margin: 0 5px; }
.arr.right { transform: rotate(-90deg); margin: 0 5px; }
.vbar .end { margin-top: auto; }
.vbar .thumb { width: 15px; }
.hbar .thumb { height: 15px; }
.tree-v .thumb { height: 43%; }
.tree-h .thumb { width: 102px; margin-right: 4px; }

/* component list */
.stage { flex: 1; display: flex; flex-direction: column; min-width: 0; }
.edit { height: 28px; flex: none; padding-left: 5px; }
.panes { flex: 1; display: flex; min-height: 0; }
.comps { width: 188px; flex: none; display: flex; flex-direction: column; padding: 4px 4px 2px 1px; gap: 1px; }
.search { display: flex; height: 25px; background: #fff; }
.search input { flex: 1; min-width: 0; border: 1px solid #7a7a7a; padding: 0 2px; height: 24px; background: #fff; }
.search button { width: 25px; display: grid; place-items: center; }
.complist { flex: 1; background: #fff; border: 2px solid #828790; border-top-width: 1px; border-left-width: 1px; padding-top: 2px; }
.complist .exp { margin-right: 8px; }
.complist .node .i16 { margin-right: 3px; }
.complist ul { padding-left: 31px; }
.complist ul li { display: flex; }
.complist ul li::before { content: ""; width: 9px; height: 8px; border-left: 1px dotted #808080; border-bottom: 1px dotted #808080; }
.picked { display: flex; align-items: center; gap: 7px; width: 57px; height: 16px; padding-left: 3px; background: #316ac5; white-space: nowrap; }

/* property editor */
.editor { flex: 1; display: flex; flex-direction: column; min-width: 0; background: #fff; padding: 0 4px 4px 3px; border-left: 1px solid #d8d8d8; }
.tabs { height: 21px; flex: none; border-bottom: 1px solid #d0d0d0; margin: 0 -4px 3px -3px; }
.tab { height: 21px; width: 63px; border-right: 1px solid #d0d0d0; background: #fff; }
.sheet { flex: 1; display: flex; min-height: 0; border: 1px solid #a0a4aa; padding: 1px; }
.sheetbody { flex: 1; }
.props { border-collapse: separate; border-spacing: 0; table-layout: fixed; width: 417px; }
.props th, .props td { height: 19px; padding: 0; border-right: 1px solid #c0c0c0; border-bottom: 1px solid #c0c0c0; font-weight: 400; text-align: left; white-space: nowrap; line-height: 16px; }
.props th { background: linear-gradient(90deg, #fcfcfc, #ececec); text-align: center; }
.props thead th { height: 23px; background: linear-gradient(#fdfdfd, #efefef); }
.props .no { width: 21px; }
.props .name { width: 191px; }
.props thead .val { width: 174px; color: #5a0050; background: linear-gradient(#f9d99c, #f0bf60); }
.props .ext { width: 31px; }
.props td:nth-child(2) { padding-left: 19px; }
.props td:nth-child(3) { padding-left: 2px; }
.props td:nth-child(4) { text-align: center; }
.props .key { color: #0000f0; }
.props input { appearance: none; width: 13px; height: 13px; border: 1px solid #333; background: #fff; display: block; margin: 0 auto; }
.props em { display: inline-block; width: 12px; text-align: center; font: 12px/12px "DejaVu Sans Mono", monospace; }
.props .sel th { background: #ffd78c; color: #5a0050; }
.props .sel td:nth-child(2) { background: #0078d7; color: #fff; }
.props .sel td:nth-child(3) { background: #d9eaf9; }
.grp { color: #808080; }
.grp th { color: #000; }
.props .grp td:nth-child(2) { padding-left: 3px; }
.plus { width: 13px; height: 13px; border: 1px solid #a5a5a5; margin-right: 3px; vertical-align: middle; background: linear-gradient(#222, #222) center / 7px 1px no-repeat, linear-gradient(#222, #222) center / 1px 7px no-repeat #fff; }
.sheet-v .thumb { height: 348px; }

/* status bar */
.status { display: flex; gap: 3px; height: 21px; flex: none; padding-top: 1px; }
.status span { border: 1px solid #d0d0d0; background: linear-gradient(#fff, #f0f0f0); line-height: 18px; white-space: nowrap; }
.c1 { width: 147px; }
.c2 { width: 77px; }
.c3 { width: 97px; }
.c4 { width: 47px; }
.c5 { flex: 1; }
.c6 { width: 70px; }

/* taskbar */
.taskbar { display: flex; height: 40px; flex: none; background: #020c10; color: #fff; }
.start { width: 48px; background: #000; display: grid; place-items: center; }
.cortana { width: 344px; background: #333; display: flex; align-items: center; gap: 5px; padding: 0 15px 0 9px; }
.cortana input { flex: 1; font-size: 14px; }
.cortana input::placeholder { color: #9a9a9a; }
.apps { display: flex; gap: 1px; }
.apps button { width: 47px; height: 40px; display: grid; place-items: center; border-bottom: 2px solid transparent; }
.apps .pin { margin-right: 3px; }
.apps .run { border-bottom-color: #76b9ed; }
.apps .active { background: #353d41; }
.tray { flex: 1; display: flex; align-items: center; justify-content: flex-end; gap: 8px; white-space: nowrap; }
.link { color: #e0e0e0; margin-right: 12px; }
.cpu { text-align: center; margin-right: 12px; }
.chev { margin-right: 2px; }
.ime { font-size: 17px; margin: 0 6px 0 2px; }
.clock { text-align: center; margin-left: 14px; line-height: 18px; }
.notes { position: relative; width: 48px; height: 40px; display: grid; place-items: center; margin-right: 9px; }
.notes b { position: absolute; left: 25px; top: 16px; font-size: 11px; }

/* floating input-method bar and speed ball */
.sogoubar { position: absolute; left: 743px; top: 14px; width: 200px; height: 24px; display: flex; align-items: center; gap: 6px; padding-left: 26px; background: #fff; border: 1px solid #b5c7da; }
.slogo { position: absolute; left: -8px; top: -4px; }
.ball { position: absolute; left: 1008px; top: -29px; width: 48px; height: 48px; border-radius: 50%; background: #3cc45a; border: 3px solid #d8e4da; outline: 1px solid #18904a; outline-offset: -4px; color: #fff; font: bold 11px/14px "DejaVu Sans", sans-serif; text-align: center; padding-top: 26px; box-shadow: 0 2px 4px #999; }

/* rebar input dialog */
.dialog { position: absolute; left: 820px; top: 165px; width: 490px; border: 1px solid #2f8be0; background: #f0f0f0; box-shadow: 0 4px 14px rgba(0, 0, 0, .35); }
.dialog header { display: flex; align-items: center; justify-content: space-between; height: 26px; background: #fff; padding: 0 10px 0 3px; }
.dbody { padding: 4px 7px 10px 5px; }
.expr { display: block; width: calc(100% - 1px); height: 27px; border: 1px solid #7a7a7a; background: #fff; text-align: center; font-size: 17px; font-weight: 700; }
.dcols { display: flex; gap: 6px; margin-top: 11px; }
.fmt { width: 252px; }
.desc { flex: 1; }
.dcols h3 { height: 20px; }
.desc h3 { padding-left: 9px; }
.fmtbox, .desc p { height: 159px; border: 1px solid #acacac; outline: 1px solid #fff; outline-offset: -2px; padding: 2px 1px; }
.fmtbox { display: flex; flex-direction: column; }
.fmtbox ul { flex: 1; overflow: hidden; font: 10px/17px "DejaVu Sans Mono", monospace; }
.fmtbox li { padding-left: 3px; white-space: nowrap; overflow: hidden; }
.fmtbox .on { background: #cbdcea; }
.fmt-h { border-top: 1px solid #fff; }
.fmt-h .left { margin: 0 4px 0 3px; }
.fmt-h .thumb { width: 17px; }
.fmt-h .right { margin-left: auto; }
.desc p { line-height: 17px; padding: 3px 2px; }
.dbtns { display: flex; justify-content: flex-end; gap: 34px; margin-top: 12px; padding-right: 15px; }
.dbtns button { width: 58px; height: 20px; background: #e1e1e1; border: 1px solid #adadad; line-height: 16px; }
.dbtns .ok { border: 2px solid #0078d7; }

/* red highlight frames */
.mark { position: absolute; border: 7px solid #f00; pointer-events: none; }
.mark-col { left: 525px; top: 104px; width: 185px; height: 191px; }
.mark-expr { left: 961px; top: 178px; width: 212px; height: 49px; }
```
